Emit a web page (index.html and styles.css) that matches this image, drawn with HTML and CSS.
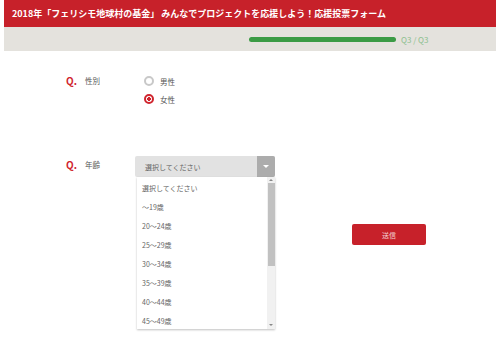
FILE: index.html
```html
<!DOCTYPE html>
<html lang="ja">
<head>
  <meta charset="UTF-8">
  <title>応援投票フォーム</title>
  <link rel="stylesheet" href="styles.css">
</head>
<body>
  <!-- ===== HEADER ===== -->
  <div class="header">2018年「フェリシモ地球村の基金」 みんなでプロジェクトを応援しよう！応援投票フォーム</div>

  <!-- ===== PROGRESS ===== -->
  <div class="progress">
    <div class="progress-bar"></div>
    <span class="progress-text">Q3 / Q3</span>
  </div>

  <!-- ===== FORM ===== -->
  <form class="form">
    <div class="row">
      <span class="q">Q.</span>
      <span class="label">性別</span>
      <div class="radios">
        <label class="radio"><span class="dot"></span>男性</label>
        <label class="radio checked"><span class="dot"></span>女性</label>
      </div>
    </div>

    <div class="row row-age">
      <span class="q">Q.</span>
      <span class="label">年齢</span>
      <div class="select-wrap">
        <div class="select">
          <span>選択してください</span>
          <span class="arrow"></span>
        </div>
        <!-- open dropdown list -->
        <div class="options">
          <ul>
            <li>選択してください</li>
            <li>〜19歳</li>
            <li>20〜24歳</li>
            <li>25〜29歳</li>
            <li>30〜34歳</li>
            <li>35〜39歳</li>
            <li>40〜44歳</li>
            <li>45〜49歳</li>
          </ul>
          <div class="scrollbar">
            <span class="sb-up"></span>
            <span class="sb-thumb"></span>
            <span class="sb-down"></span>
          </div>
        </div>
      </div>
    </div>

    <div class="submit-row">
      <button type="button" class="submit">送信</button>
    </div>
  </form>
</body>
</html>
```

FILE: styles.css
```css
html, body {
  margin: 0;
  padding: 0;
  background: #fff;
}
body {
  min-height: 100vh;
  padding: 0 4px;
  font-family: "Noto Sans CJK JP", "Noto Sans", sans-serif;
  color: #555;
}

/* ---------------- Header ---------------- */
.header {
  height: 27px;
  line-height: 27px;
  padding-left: 8px;
  background: #c7212a;
  color: #fff;
  font-size: 9px;
  font-weight: bold;
  white-space: nowrap;
  overflow: hidden;
}

/* ---------------- Progress ---------------- */
.progress {
  height: 24px;
  display: flex;
  align-items: center;
  padding-left: 245px;
  background: #e4e2dd;
}
.progress-bar {
  width: 147px;
  height: 5px;
  border-radius: 3px;
  background: #3b9b45;
}
.progress-text {
  margin-left: 5px;
  font-size: 8px;
  color: #8cc08e;
}

/* ---------------- Form ---------------- */
.form {
  margin-top: 21px;
  padding-left: 62px;
}
.row {
  display: grid;
  grid-template-columns: 19px 50px auto;
  align-items: start;
}
.q {
  line-height: 18px;
  font-size: 10px;
  font-weight: bold;
  color: #d0252e;
}
.label {
  line-height: 18px;
  font-size: 7.5px;
  color: #555;
}
.radios {
  margin-left: 9px;
  display: flex;
  flex-direction: column;
}
.radio {
  height: 18px;
  display: flex;
  align-items: center;
  gap: 6px;
  font-size: 7.5px;
  color: #555;
}
.dot {
  width: 6px;
  height: 6px;
  border: 2px solid #c8c8c8;
  border-radius: 50%;
  background: #fff;
}
.radio.checked .dot {
  border-color: #d0252e;
  background: radial-gradient(circle, #d0252e 0 1.6px, #fff 2px);
}

/* ---------------- Select ---------------- */
.row-age {
  margin-top: 48px;
  height: 21px;
}
.select-wrap {
  position: relative;
  width: 140px;
}
.select {
  height: 21px;
  display: flex;
  align-items: center;
  padding-left: 10px;
  background: #e2e2e2;
  border-radius: 2px;
  font-size: 7px;
  color: #666;
}
.select span:first-child { flex: 1; }
.arrow {
  align-self: stretch;
  width: 18px;
  background: #acacac;
  border-radius: 0 2px 2px 0;
  position: relative;
}
.arrow::after {
  content: "";
  position: absolute;
  left: 6px; top: 9px;
  border: 3px solid transparent;
  border-top: 3px solid #fff;
  border-bottom: 0;
}

/* open list lies over the page */
.options {
  position: absolute;
  top: 21px;
  left: 2px;
  right: 0;
  height: 152px;
  background: #fff;
  box-shadow: 0 1px 2px rgba(0,0,0,0.25);
  overflow: hidden;
  display: flex;
  z-index: 2;
}
.options ul {
  flex: 1;
  margin: 0;
  padding: 2px 0 0 5px;
  list-style: none;
}
.options li {
  height: 19px;
  line-height: 19px;
  font-size: 7px;
  color: #666;
  white-space: nowrap;
}
.scrollbar {
  width: 8px;
  background: #f1f1f1;
  display: flex;
  flex-direction: column;
  align-items: center;
}
.sb-up, .sb-down {
  width: 0; height: 0;
  border: 2px solid transparent;
  margin: 2px 0;
}
.sb-up { border-bottom: 2px solid #888; border-top: 0; }
.sb-down { border-top: 2px solid #888; border-bottom: 0; margin-top: auto; margin-bottom: 3px; }
.sb-thumb {
  width: 7px;
  height: 83px;
  flex: none;
  background: #c1c1c1;
}

/* ---------------- Submit ---------------- */
.submit-row {
  margin-top: 47px;
  padding-left: 286px;
}
.submit {
  display: block;
  width: 74px;
  height: 21px;
  border: none;
  border-radius: 2px;
  background: #c7212a;
  color: #f2d0d2;
  font-family: inherit;
  font-size: 7px;
  padding: 0;
}
```
